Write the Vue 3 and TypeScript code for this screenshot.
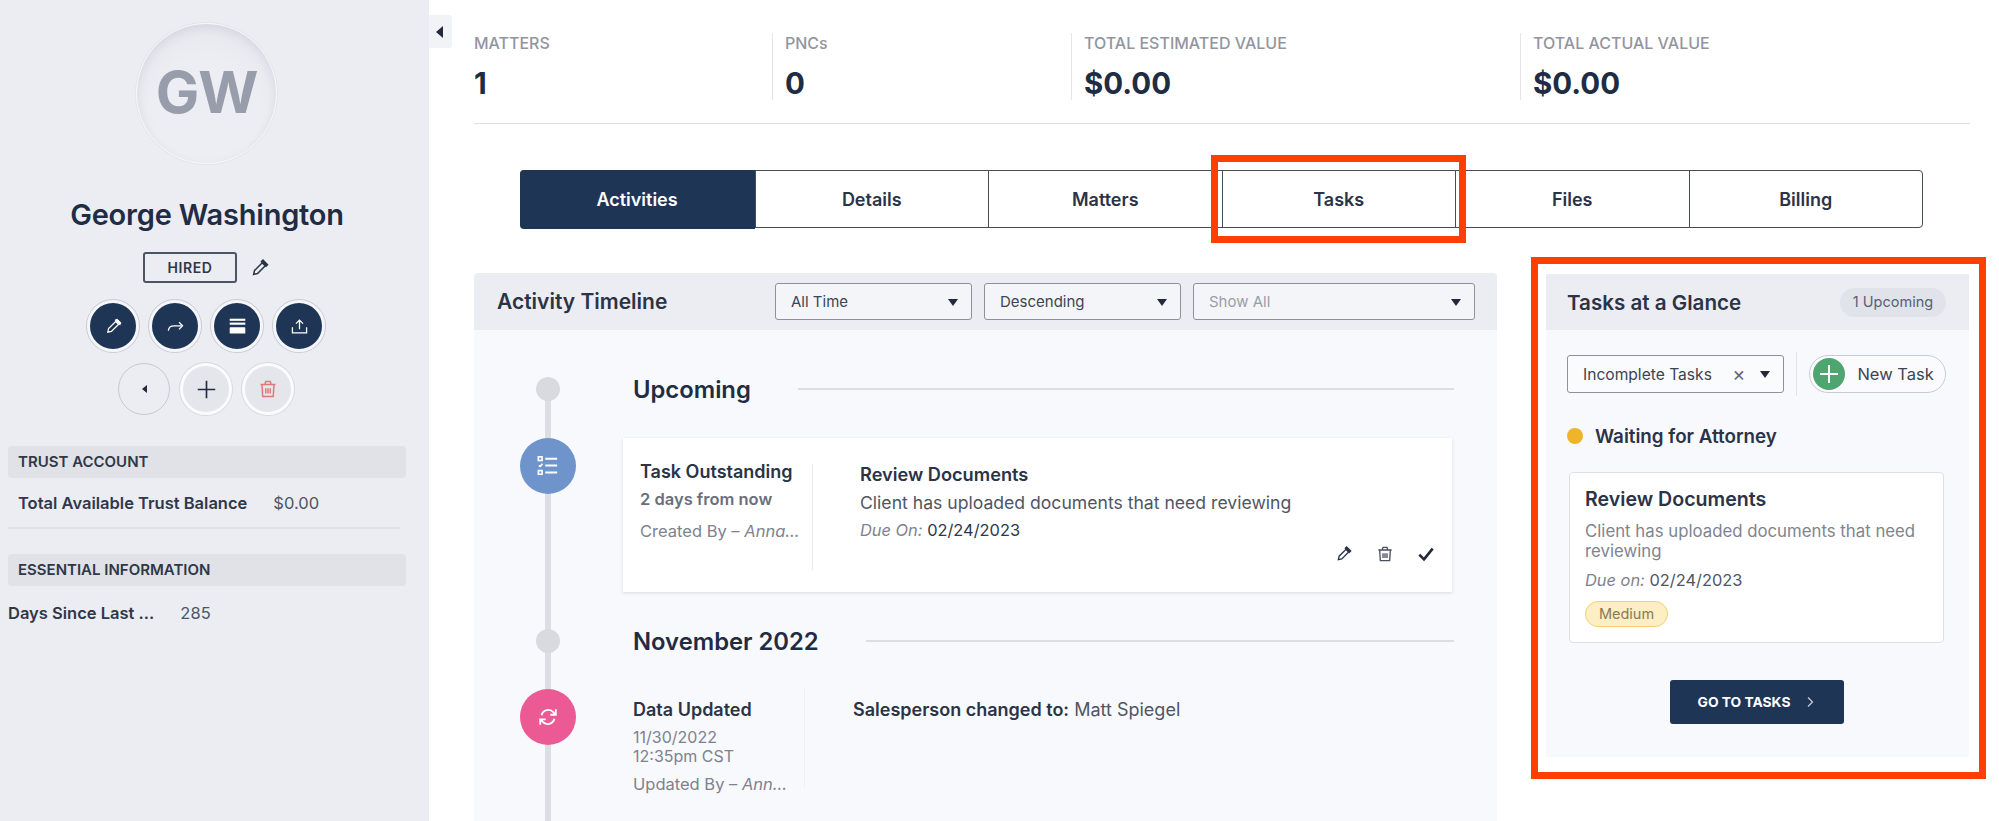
<script setup lang="ts">
const stats = [
  { label: 'MATTERS', value: '1' },
  { label: 'PNCs', value: '0' },
  { label: 'TOTAL ESTIMATED VALUE', value: '$0.00' },
  { label: 'TOTAL ACTUAL VALUE', value: '$0.00' },
]
const tabs = ['Activities', 'Details', 'Matters', 'Tasks', 'Files', 'Billing']
</script>

<template>
  <div class="page">
    <aside class="side">
      <div class="avatar">GW</div>
      <h1 class="name">George Washington</h1>
      <div class="status">
        <span class="hired">HIRED</span>
        <svg class="status-pencil" viewBox="0 0 24 24" fill="none" stroke="#2b3347" stroke-width="2">
          <path d="M3.5 20.500l1.200-5.200L15 5l4 4L8.700 19.300z" />
          <path d="M14 3.500l2-2 6 6-2 2z" fill="#2b3347" />
        </svg>
      </div>
      <div class="round-row">
        <span class="round dark">
          <svg viewBox="0 0 24 24" fill="none" stroke="#fff" stroke-width="1.800">
            <path d="M4 20l1-5L15 5l4 4L9 19z" />
            <path d="M15 3l2-1 5 5-1 2z" fill="#fff" />
          </svg>
        </span>
        <span class="round dark">
          <svg viewBox="0 0 24 24" fill="none" stroke="#fff" stroke-width="1.800">
            <path d="M2 18c0-5 3-7 8-7h11" />
            <path d="M17 6l5 5-5 5" />
          </svg>
        </span>
        <span class="round dark">
          <svg viewBox="0 0 24 24" fill="#fff">
            <rect x="1" y="1" width="22" height="3" />
            <rect x="1" y="6.500" width="22" height="3" />
            <rect x="1" y="13" width="22" height="9" rx="1" />
          </svg>
        </span>
        <span class="round dark">
          <svg viewBox="0 0 24 24" fill="none" stroke="#fff" stroke-width="1.800">
            <path d="M12 16V3M7 8l5-5 5 5" />
            <path d="M2 13v8h20v-8" />
          </svg>
        </span>
      </div>
      <div class="round-row second">
        <span class="round ghost"><i class="tri small"></i></span>
        <span class="round light">
          <svg viewBox="0 0 24 24" fill="none" stroke="#1f2c44" stroke-width="1.900"><path d="M12 2v20M2 12h20" /></svg>
        </span>
        <span class="round light">
          <svg class="trash" viewBox="0 0 24 24" fill="none" stroke="#e0787a" stroke-width="2">
            <path d="M2 6h20M8 5l1-3h6l1 3M4 6l1 16h14l1-16M9 11v7M12 11v7M15 11v7" />
          </svg>
        </span>
      </div>

      <div class="side-head first">TRUST ACCOUNT</div>
      <div class="trust-row">
        <b>Total Available Trust Balance</b>
        <span>$0.00</span>
      </div>
      <div class="side-head">ESSENTIAL INFORMATION</div>
      <div class="days-row">
        <b>Days Since Last ...</b>
        <span>285</span>
      </div>
    </aside>

    <button class="collapse"><i class="tri"></i></button>

    <main class="main">
      <section class="stats">
        <div v-for="s in stats" :key="s.label" class="stat">
          <div class="stat-label">{{ s.label }}</div>
          <div class="stat-value">{{ s.value }}</div>
        </div>
      </section>

      <nav class="tabs">
        <div v-for="(t, i) in tabs" :key="t" class="tab" :class="{ active: i === 0 }">
          {{ t }}
          <span v-if="t === 'Tasks'" class="mark tab-mark"></span>
        </div>
      </nav>

      <div class="columns">
        <section class="timeline">
          <header class="tl-head">
            <h2>Activity Timeline</h2>
            <div class="select s1">All Time<i class="caret"></i></div>
            <div class="select s1">Descending<i class="caret"></i></div>
            <div class="select s2">Show All<i class="caret"></i></div>
          </header>
          <div class="tl-body">
            <div class="rail"></div>

            <div class="period upcoming">
              <span class="dot"></span>
              <h3>Upcoming</h3>
              <span class="rule"></span>
            </div>

            <div class="entry-card">
              <span class="badge blue">
                <svg viewBox="0 0 24 24" fill="none" stroke="#fff" stroke-width="1.800">
                  <rect x="1.500" y="2" width="4" height="4" />
                  <rect x="1.500" y="17" width="4" height="4" />
                  <path d="M2 11.500l1.500 1L6 9.500" />
                  <path d="M9 4h13M9 11.500h13M9 19h13" stroke-width="2.200" />
                </svg>
              </span>
              <div class="meta">
                <div class="meta-title">Task Outstanding</div>
                <div class="meta-when">2 days from now</div>
                <div class="meta-by">Created By – <em>Anna...</em></div>
              </div>
              <div class="entry-main">
                <div class="entry-title">Review Documents</div>
                <div class="entry-text">Client has uploaded documents that need reviewing</div>
                <div class="entry-due"><em>Due On:</em> 02/24/2023</div>
              </div>
              <div class="entry-tools">
                <svg viewBox="0 0 24 24" fill="none" stroke="#2b3347" stroke-width="2">
                  <path d="M3.500 20.500l1.200-5.200L15 5l4 4L8.700 19.300z" />
                  <path d="M14 3.500l2-2 6 6-2 2z" fill="#2b3347" />
                </svg>
                <svg viewBox="0 0 24 24" fill="none" stroke="#4a5060" stroke-width="2">
                  <path d="M2 6h20M8 5l1-3h6l1 3M4 6l1 16h14l1-16M9 11v7M12 11v7M15 11v7" />
                </svg>
                <svg viewBox="0 0 24 24" fill="none" stroke="#23293a" stroke-width="4"><path d="M2 13l7 7L22 4" /></svg>
              </div>
            </div>

            <div class="period november">
              <span class="dot"></span>
              <h3>November 2022</h3>
              <span class="rule"></span>
            </div>

            <div class="entry-plain">
              <span class="badge pink">
                <svg viewBox="0 0 24 24" fill="none" stroke="#fff" stroke-width="2">
                  <path d="M5 10a7.500 7.500 0 0 1 13-3l2 2.500M20.500 3.500v6h-6" />
                  <path d="M19 14a7.500 7.500 0 0 1-13 3l-2-2.500M3.500 20.500v-6h6" />
                </svg>
              </span>
              <div class="plain-meta">
                <div class="meta-title">Data Updated</div>
                <div class="plain-date">11/30/2022<br />12:35pm CST</div>
                <div class="meta-by">Updated By – <em>Ann...</em></div>
              </div>
              <div class="plain-main"><b>Salesperson changed to:</b> Matt Spiegel</div>
            </div>
          </div>
        </section>

        <section class="glance">
          <span class="mark glance-mark"></span>
          <header class="gl-head">
            <h2>Tasks at a Glance</h2>
            <span class="pill">1 Upcoming</span>
          </header>
          <div class="gl-body">
            <div class="gl-filter">
              <div class="select s3">
                Incomplete Tasks
                <span class="clear">×</span>
                <i class="caret"></i>
              </div>
              <span class="vsep"></span>
              <button class="new-task">
                <span class="plus">
                  <svg viewBox="0 0 24 24" fill="none" stroke="#fff" stroke-width="2"><path d="M12 3v18M3 12h18" /></svg>
                </span>
                New Task
              </button>
            </div>
            <div class="wait"><span class="wait-dot"></span>Waiting for Attorney</div>
            <article class="task">
              <div class="task-title">Review Documents</div>
              <p class="task-text">Client has uploaded documents that need reviewing</p>
              <div class="task-due"><em>Due on:</em> 02/24/2023</div>
              <span class="medium">Medium</span>
            </article>
            <button class="go">
              GO TO TASKS
              <svg viewBox="0 0 12 12" fill="none" stroke="#c9d0dc" stroke-width="1.200"><path d="M4 1.500L8.500 6 4 10.500" /></svg>
            </button>
          </div>
        </section>
      </div>
    </main>
  </div>
</template>

<style>
html,
body {
  margin: 0;
  background: #fff;
  overflow: hidden;
}
</style>

<style scoped>
.page {
  display: flex;
  height: 821px;
  overflow: hidden;
  font-family: Inter, 'Liberation Sans', sans-serif;
  color: #1f2c44;
}

/* sidebar */
.side {
  width: 429px;
  flex: none;
  box-sizing: border-box;
  padding: 23px 23px 0 8px;
  background: #ebedf3;
  display: flex;
  flex-direction: column;
}
.avatar {
  width: 141px;
  height: 141px;
  margin-left: 128px;
  border-radius: 50%;
  box-sizing: border-box;
  border: 1px solid #f6f7fa;
  background: radial-gradient(circle at 50% 65%, #eceef3 45%, #e3e5eb 100%);
  box-shadow: inset 0 4px 10px rgba(150, 155, 175, 0.22), 0 0 0 1px #e3e5eb;
  color: #989dab;
  font-size: 58px;
  font-weight: 700;
  letter-spacing: -1px;
  display: flex;
  align-items: center;
  justify-content: center;
  padding-bottom: 4px;
}
.name {
  margin: 33px 0 0;
  text-align: center;
  width: 398px;
  font-size: 29px;
  line-height: 36px;
  font-weight: 600;
  letter-spacing: -0.2px;
}
.status {
  display: flex;
  align-items: center;
  margin: 19px 0 0 135px;
}
.hired {
  width: 94px;
  height: 31px;
  box-sizing: border-box;
  border: 2px solid #4d5463;
  border-radius: 3px;
  font-size: 14px;
  font-weight: 600;
  letter-spacing: 0.6px;
  color: #2f3748;
  display: flex;
  align-items: center;
  justify-content: center;
}
.status-pencil {
  width: 18px;
  height: 18px;
  margin-left: 14px;
}
.round-row {
  display: flex;
  gap: 10px;
  margin: 17px 0 0 79px;
}
.round-row.second {
  margin: 11px 0 0 110px;
}
.round {
  width: 52px;
  height: 52px;
  box-sizing: border-box;
  border-radius: 50%;
  display: flex;
  align-items: center;
  justify-content: center;
}
.round svg {
  width: 17px;
  height: 17px;
}
.round.dark {
  background: #1f3556;
  border: 3px solid #f5f6f9;
  box-shadow: 0 0 0 1px #c8cbd4;
}
.round.ghost {
  border: 1px solid #c6c9d2;
}
.round.light {
  background: #e4e6eb;
  border: 3px solid #fbfbfd;
  box-shadow: 0 0 0 1px #d6d8df;
}
.round.light svg {
  width: 21px;
  height: 21px;
}
.round.light svg.trash {
  width: 18px;
  height: 18px;
}
.tri {
  display: block;
  width: 0;
  height: 0;
  border-style: solid;
  border-width: 6px 7px 6px 0;
  border-color: transparent #23293a transparent transparent;
}
.tri.small {
  border-width: 4px 5px 4px 0;
}
.side-head {
  height: 32px;
  width: 398px;
  flex: none;
  margin-top: 25px;
  box-sizing: border-box;
  padding-left: 10px;
  border-radius: 4px;
  background: #e0e2e7;
  color: #2f3748;
  font-size: 15px;
  font-weight: 600;
  line-height: 32px;
}
.side-head.first {
  margin-top: 31px;
}
.trust-row {
  width: 392px;
  height: 51px;
  box-sizing: border-box;
  padding-left: 10px;
  border-bottom: 2px solid #dfe1e7;
  display: flex;
  align-items: center;
  font-size: 16.500px;
}
.trust-row b,
.days-row b {
  font-weight: 600;
  color: #2f3748;
}
.trust-row span {
  margin-left: 26px;
  color: #4f5564;
}
.days-row {
  display: flex;
  align-items: center;
  height: 54px;
  font-size: 16.500px;
}
.days-row span {
  margin-left: 26px;
  color: #4f5564;
}

/* collapse handle */
.collapse {
  flex: none;
  align-self: flex-start;
  width: 23px;
  height: 33px;
  margin-top: 15px;
  padding: 0 0 0 7px;
  border: 0;
  background: #f2f3f6;
  border-radius: 0 3px 3px 0;
}

/* main */
.main {
  width: 1496px;
  flex: none;
  margin-left: 22px;
}
.stats {
  display: grid;
  grid-template-columns: 298px 299px 449px 1fr;
  height: 124px;
  box-sizing: border-box;
  padding-top: 33px;
  border-bottom: 1px solid #dfe1e6;
}
.stat {
  height: 67px;
  padding-left: 12px;
  border-left: 1px solid #e4e5ea;
}
.stat:first-child {
  padding-left: 0;
  border-left: 0;
}
.stat-label {
  font-size: 16px;
  line-height: 20px;
  font-weight: 500;
  color: #92959e;
}
.stat-value {
  margin-top: 10px;
  font-size: 29.500px;
  line-height: 40px;
  font-weight: 700;
  color: #1f2c44;
}
.tabs {
  display: grid;
  grid-template-columns: repeat(6, 1fr);
  width: 1403px;
  height: 58px;
  margin: 46px 0 0 46px;
  box-sizing: border-box;
  border: 1.500px solid #454b59;
  border-radius: 4px;
}
.tab {
  position: relative;
  display: flex;
  align-items: center;
  justify-content: center;
  font-size: 18px;
  font-weight: 600;
  color: #2b3347;
  border-left: 1.500px solid #454b59;
}
.tab:first-child {
  border-left: 0;
}
.tab.active {
  margin: -1.500px 0 -1.500px -1.500px;
  background: #1f3556;
  color: #fff;
  border-radius: 4px 0 0 4px;
}
.mark {
  position: absolute;
  box-sizing: border-box;
  border: 7px solid #fd3f03;
  pointer-events: none;
}
.tab-mark {
  left: -12px;
  top: -16px;
  width: 255px;
  height: 88px;
}
.columns {
  display: flex;
  gap: 49px;
  margin-top: 45px;
}

/* timeline */
.timeline {
  width: 1023px;
  flex: none;
}
.tl-head {
  height: 57px;
  background: #ebedf3;
  border-radius: 4px 4px 0 0;
  display: flex;
  align-items: center;
  padding-left: 23px;
}
.tl-head h2 {
  width: 278px;
  flex: none;
  margin: 0;
  font-size: 21px;
  font-weight: 600;
  color: #2b3347;
}
.select {
  position: relative;
  height: 37px;
  box-sizing: border-box;
  display: flex;
  align-items: center;
  padding-left: 15px;
  margin-right: 12px;
  border: 1px solid #8d919c;
  border-radius: 3px;
  background: #f4f5f8;
  font-size: 15px;
  color: #3d4454;
}
.select.s1 {
  width: 197px;
}
.select.s2 {
  width: 282px;
  color: #9a9da6;
  margin-right: 0;
}
.select.s3 {
  width: 218px;
  height: 38px;
  margin-right: 0;
  background: #fafbfd;
  font-size: 15.600px;
}
.caret {
  position: absolute;
  right: 13px;
  top: 15px;
  width: 0;
  height: 0;
  border-style: solid;
  border-width: 7px 5.500px 0;
  border-color: #23293a transparent transparent;
}
.clear {
  position: absolute;
  right: 38px;
  top: 6px;
  font-size: 20px;
  color: #62687a;
}
.tl-body {
  position: relative;
  display: flow-root;
  height: 491px;
  background: #f8f9fc;
  padding: 0 43px 0 149px;
}
.rail {
  position: absolute;
  left: 71px;
  top: 59px;
  bottom: 0;
  width: 6px;
  background: #dcdee4;
}
.period {
  position: relative;
  height: 36px;
  display: flex;
  align-items: center;
  padding-left: 10px;
}
.period.upcoming {
  margin-top: 41px;
}
.period.november {
  margin-top: 31px;
}
.period h3 {
  margin: 0;
  font-size: 23.800px;
  font-weight: 600;
  white-space: nowrap;
}
.dot {
  position: absolute;
  left: -87px;
  top: 6px;
  width: 24px;
  height: 24px;
  border-radius: 50%;
  background: #d8dadf;
}
.rule {
  height: 2px;
  flex: 1;
  margin: 0 0 0 47px;
  background: #dcdee4;
}
.badge {
  position: absolute;
  left: -103px;
  width: 56px;
  height: 56px;
  border-radius: 50%;
  display: flex;
  align-items: center;
  justify-content: center;
}
.badge svg {
  width: 22px;
  height: 22px;
}
.badge.blue {
  top: -1px;
  background: #6f94cb;
}
.badge.pink {
  background: #ec5a96;
}
.entry-card {
  position: relative;
  width: 829px;
  height: 154px;
  margin-top: 31px;
  box-sizing: border-box;
  display: flex;
  background: #fff;
  box-shadow: 0 1px 3px rgba(60, 70, 100, 0.16);
}
.entry-card .badge {
  top: 0;
}
.meta {
  width: 190px;
  height: 106px;
  flex: none;
  margin-top: 26px;
  box-sizing: border-box;
  padding-left: 17px;
  border-right: 1px solid #e8e9ee;
}
.meta-title {
  margin-top: -3px;
  font-size: 18px;
  line-height: 22px;
  font-weight: 600;
  color: #2b3347;
}
.meta-when {
  margin-top: 6px;
  font-size: 16.500px;
  line-height: 20px;
  font-weight: 600;
  color: #6a6f7d;
}
.meta-by {
  margin-top: 12px;
  font-size: 16.500px;
  line-height: 20px;
  color: #7e828e;
  white-space: nowrap;
}
.entry-main {
  margin: 24px 0 0 47px;
}
.entry-title {
  font-size: 18.200px;
  line-height: 24px;
  font-weight: 600;
  color: #2b3347;
}
.entry-text {
  margin-top: 5px;
  font-size: 17.600px;
  line-height: 23px;
  color: #4f5564;
}
.entry-due {
  margin-top: 5px;
  font-size: 16.400px;
  line-height: 22px;
  color: #2f3748;
}
.entry-due em,
.task-due em {
  color: #7e828e;
}
.entry-tools {
  position: absolute;
  right: 18px;
  bottom: 30px;
  display: flex;
  gap: 25px;
}
.entry-tools svg {
  width: 16px;
  height: 16px;
}
.entry-plain {
  position: relative;
  display: flex;
  margin-top: 29px;
  padding-left: 10px;
}
.entry-plain .badge {
  top: 1px;
}
.plain-meta {
  width: 172px;
  height: 100px;
  flex: none;
  border-right: 1px solid #eff0f4;
  padding-top: 14px;
  box-sizing: border-box;
}
.plain-date {
  margin-top: 7px;
  font-size: 16px;
  line-height: 19px;
  color: #7e828e;
}
.plain-meta .meta-by {
  margin-top: 8px;
}
.plain-main {
  margin: 11px 0 0 48px;
  font-size: 18px;
  line-height: 22px;
  color: #4f5564;
}
.plain-main b {
  font-weight: 600;
  color: #2b3347;
}

/* tasks at a glance */
.glance {
  position: relative;
  width: 423px;
  flex: none;
  margin-top: 1px;
}
.glance-mark {
  left: -15px;
  top: -17px;
  width: 455px;
  height: 522px;
}
.gl-head {
  height: 56px;
  box-sizing: border-box;
  padding: 0 23px 0 21px;
  background: #ebedf3;
  display: flex;
  align-items: center;
  justify-content: space-between;
}
.gl-head h2 {
  margin: 0;
  font-size: 20.600px;
  font-weight: 600;
  color: #2b3347;
}
.pill {
  width: 106px;
  height: 29px;
  border-radius: 15px;
  background: #e0e3ea;
  font-size: 14.500px;
  line-height: 27px;
  text-align: center;
  color: #5a6070;
}
.gl-body {
  height: 427px;
  box-sizing: border-box;
  padding: 22px 23px 0 21px;
  background: #f8f9fc;
}
.gl-filter {
  display: flex;
  align-items: center;
}
.vsep {
  width: 1px;
  height: 44px;
  margin: 0 12px;
  background: #e3e4ea;
}
.new-task {
  width: 137px;
  height: 38px;
  box-sizing: border-box;
  padding: 0 0 0 3px;
  display: flex;
  align-items: center;
  gap: 12px;
  border: 1px solid #c8cbd3;
  border-radius: 19px;
  background: #fbfbfd;
  font: inherit;
  font-size: 16.500px;
  color: #3d4454;
}
.plus {
  width: 32px;
  height: 32px;
  flex: none;
  border-radius: 50%;
  background: #4fa570;
  display: flex;
  align-items: center;
  justify-content: center;
}
.plus svg {
  width: 24px;
  height: 24px;
}
.wait {
  display: flex;
  align-items: center;
  gap: 12px;
  margin-top: 28px;
  height: 24px;
  font-size: 18.800px;
  font-weight: 600;
  color: #2b3347;
}
.wait-dot {
  width: 16px;
  height: 16px;
  border-radius: 50%;
  background: #efb429;
}
.task {
  width: 375px;
  height: 171px;
  margin: 24px 0 0 2px;
  box-sizing: border-box;
  padding: 14px 15px 0;
  border: 1px solid #dddfe5;
  border-radius: 4px;
  background: #fff;
}
.task-title {
  font-size: 19.600px;
  line-height: 24px;
  font-weight: 600;
  color: #2b3347;
}
.task-text {
  margin: 10px 0 0;
  font-size: 16.800px;
  line-height: 20px;
  color: #80848f;
}
.task-due {
  margin-top: 9px;
  font-size: 16.400px;
  line-height: 20px;
  color: #4f5564;
}
.medium {
  display: inline-block;
  margin-top: 11px;
  width: 83px;
  height: 26px;
  box-sizing: border-box;
  border: 1.500px solid #f4cf6e;
  border-radius: 13px;
  background: #fdeec4;
  font-size: 14.500px;
  line-height: 23px;
  text-align: center;
  color: #8a7a55;
}
.go {
  width: 174px;
  height: 44px;
  margin: 37px 0 0 103px;
  display: flex;
  align-items: center;
  justify-content: center;
  gap: 14px;
  border: 0;
  border-radius: 3px;
  background: #1f3556;
  color: #fff;
  font: inherit;
  font-size: 13.800px;
  font-weight: 700;
}
.go svg {
  width: 12px;
  height: 12px;
}
</style>
